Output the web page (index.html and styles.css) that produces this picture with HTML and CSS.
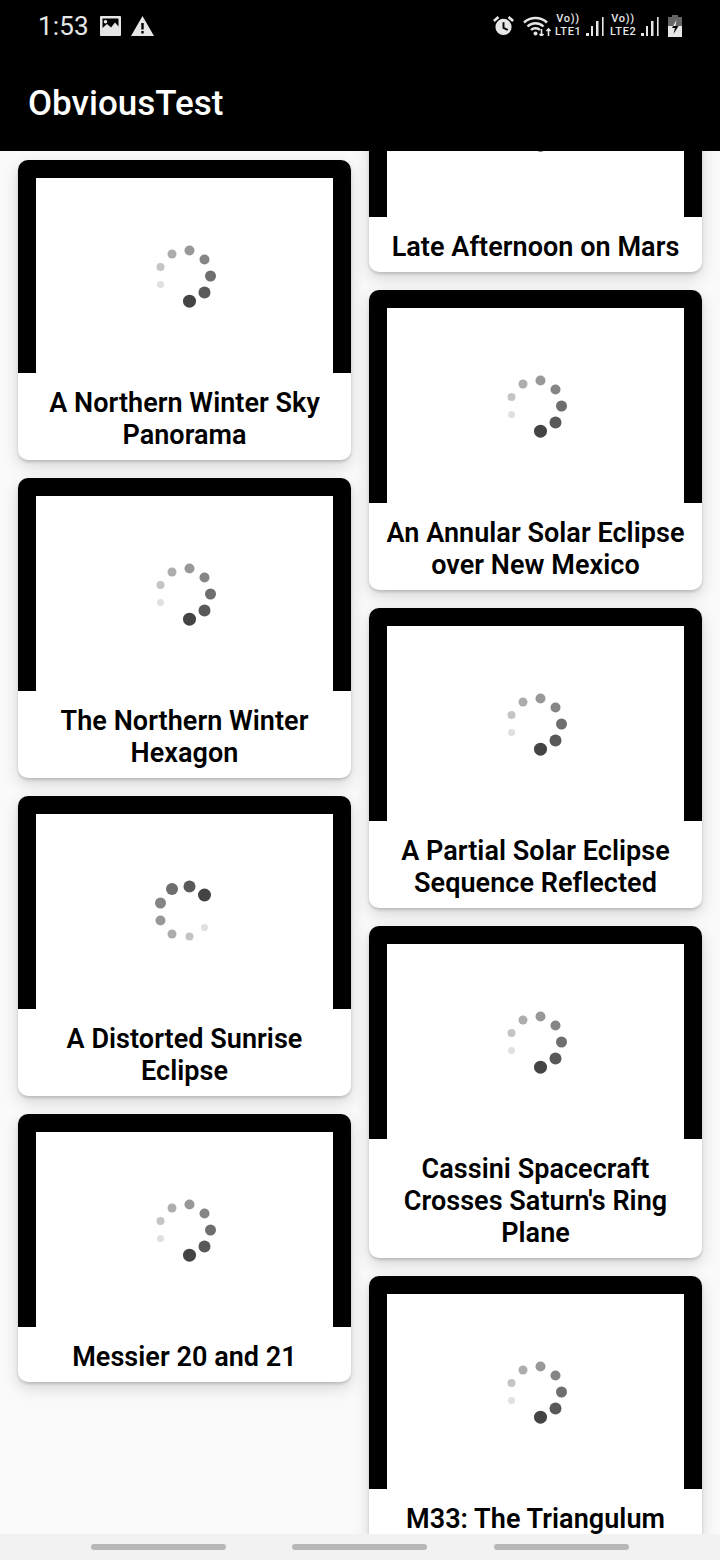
FILE: index.html
```html
<!DOCTYPE html>
<html lang="en">
<head>
<meta charset="utf-8">
<title>ObviousTest</title>
<link rel="stylesheet" href="styles.css">
</head>
<body>
<svg class="defs" aria-hidden="true">
  <symbol id="spin-a" viewBox="-33 -33 66 66">
    <circle cx="4.5" cy="25.2" r="6.5" fill="#444"/>
    <circle cx="19.5" cy="16.5" r="6" fill="#595959"/>
    <circle cx="25.5" cy="0" r="5.5" fill="#6e6e6e"/>
    <circle cx="19.5" cy="-16.5" r="5" fill="#858585"/>
    <circle cx="4.5" cy="-25.5" r="5" fill="#989898"/>
    <circle cx="-13" cy="-22" r="4.5" fill="#adadad"/>
    <circle cx="-24.5" cy="-9" r="4" fill="#c4c4c4"/>
    <circle cx="-24.5" cy="8.5" r="3.5" fill="#e0e0e0"/>
  </symbol>
  <symbol id="spin-b" viewBox="-33 -33 66 66">
    <circle cx="19.5" cy="-17" r="6.5" fill="#444"/>
    <circle cx="4.5" cy="-25.5" r="6" fill="#595959"/>
    <circle cx="-13" cy="-23" r="6" fill="#6e6e6e"/>
    <circle cx="-24.5" cy="-9" r="5.5" fill="#858585"/>
    <circle cx="-24.5" cy="8.5" r="5" fill="#989898"/>
    <circle cx="-13" cy="22" r="4.5" fill="#adadad"/>
    <circle cx="4.5" cy="24.5" r="4" fill="#c4c4c4"/>
    <circle cx="19.5" cy="15.5" r="3.5" fill="#e0e0e0"/>
  </symbol>
</svg>

<header class="appbar">
  <div class="status">
    <div class="status-left">
      <span class="time">1:53</span>
      <svg class="ic-image" viewBox="0 0 21 20"><path fill="#e6e6e6" fill-rule="evenodd" d="M1 0h19a1 1 0 0 1 1 1v18a1 1 0 0 1-1 1H1a1 1 0 0 1-1-1V1a1 1 0 0 1 1-1zM2.500 2.500v9.500l4.500-4 4 3.500 4-5 3.500 4V2.500zM5.500 4a1.800 1.800 0 1 1 0 3.600a1.800 1.800 0 0 1 0-3.600z"/></svg>
      <svg class="ic-warn" viewBox="0 0 23 20"><path fill="#e6e6e6" fill-rule="evenodd" d="M11.500 0L23 20H0zM10.300 7v6.500h2.400V7zM10.300 15v2.400h2.400V15z"/></svg>
    </div>
    <div class="status-right">
      <svg class="ic-alarm" viewBox="0 0 22 22"><path fill="#e6e6e6" fill-rule="evenodd" d="M11 3.500a8.500 8.500 0 1 1 0 17a8.500 8.500 0 0 1 0-17zM10 7v6.500l5 2.500 1-1.600-4-2V7zM1.800 6.800L0 4.800 4.800.6l1.800 2zM20.200 6.800L22 4.800 17.200.6l-1.800 2z"/></svg>
      <svg class="ic-wifi" viewBox="0 0 28 20"><path fill="none" stroke="#e6e6e6" stroke-width="2.400" d="M1 6.500a17 17 0 0 1 23 0M4.500 10.500a11.500 11.500 0 0 1 16 0M8 14a6.500 6.500 0 0 1 9 0"/><circle cx="12.500" cy="17.500" r="2" fill="#e6e6e6"/><path fill="none" stroke="#e6e6e6" stroke-width="1.600" d="M18.500 13v7M16.500 18l2 2 2-2M25.500 20v-7M23.500 15l2-2 2 2"/></svg>
      <div class="sim">Vo))<br>LTE1</div>
      <svg class="ic-bars" viewBox="0 0 18 19"><path fill="#e6e6e6" d="M0 16h3v3H0zM5 9h2v10H5zM10 4h2.500v15H10zM16 0h1.600v19H16z"/></svg>
      <div class="sim">Vo))<br>LTE2</div>
      <svg class="ic-bars" viewBox="0 0 18 19"><path fill="#e6e6e6" d="M0 16h3v3H0zM5 9h2v10H5zM10 4h2.500v15H10zM16 0h1.600v19H16z"/></svg>
      <svg class="ic-batt" viewBox="0 0 14 22"><path fill="#666" d="M4 0h6v2h4v9H0V2h4z"/><path fill="#e6e6e6" fill-rule="evenodd" d="M0 11h14v11H0zM8.500 5L4 13h3l-1.500 6L10.500 11H7.500z"/></svg>
    </div>
  </div>
  <h1 class="title">ObviousTest</h1>
</header>

<main class="grid">
  <section class="col col-left">
    <article class="card">
      <div class="thumb"><div class="thumb-inner"><svg class="spinner"><use href="#spin-a"/></svg></div></div>
      <h2 class="name">A Northern Winter Sky Panorama</h2>
    </article>
    <article class="card">
      <div class="thumb"><div class="thumb-inner"><svg class="spinner"><use href="#spin-a"/></svg></div></div>
      <h2 class="name">The Northern Winter Hexagon</h2>
    </article>
    <article class="card">
      <div class="thumb"><div class="thumb-inner"><svg class="spinner"><use href="#spin-b"/></svg></div></div>
      <h2 class="name">A Distorted Sunrise Eclipse</h2>
    </article>
    <article class="card">
      <div class="thumb"><div class="thumb-inner"><svg class="spinner"><use href="#spin-a"/></svg></div></div>
      <h2 class="name">Messier 20 and 21</h2>
    </article>
  </section>
  <section class="col col-right">
    <article class="card">
      <div class="thumb"><div class="thumb-inner"><svg class="spinner"><use href="#spin-a"/></svg></div></div>
      <h2 class="name">Late Afternoon on Mars</h2>
    </article>
    <article class="card">
      <div class="thumb"><div class="thumb-inner"><svg class="spinner"><use href="#spin-a"/></svg></div></div>
      <h2 class="name">An Annular Solar Eclipse over New Mexico</h2>
    </article>
    <article class="card">
      <div class="thumb"><div class="thumb-inner"><svg class="spinner"><use href="#spin-a"/></svg></div></div>
      <h2 class="name">A Partial Solar Eclipse Sequence Reflected</h2>
    </article>
    <article class="card">
      <div class="thumb"><div class="thumb-inner"><svg class="spinner"><use href="#spin-a"/></svg></div></div>
      <h2 class="name">Cassini Spacecraft Crosses Saturn's Ring Plane</h2>
    </article>
    <article class="card">
      <div class="thumb"><div class="thumb-inner"><svg class="spinner"><use href="#spin-a"/></svg></div></div>
      <h2 class="name">M33: The Triangulum</h2>
    </article>
  </section>
</main>

<nav class="navbar">
  <span class="pill"></span>
  <span class="pill"></span>
  <span class="pill"></span>
</nav>
</body>
</html>
```
FILE: styles.css
```css
* { box-sizing: border-box; }
html, body { margin: 0; padding: 0; }
body {
  width: 720px;
  height: 1560px;
  display: flex;
  flex-direction: column;
  overflow: hidden;
  background: #fafafa;
  font-family: Roboto, "Liberation Sans", sans-serif;
}
.defs { width: 0; height: 0; display: block; }

.appbar {
  height: 151px;
  flex: none;
  background: #000;
  position: relative;
  z-index: 2;
  display: flex;
  flex-direction: column;
}
.status {
  height: 52px;
  display: flex;
  justify-content: space-between;
  align-items: center;
  padding: 0 38px;
}
.status-left, .status-right { display: flex; align-items: center; }
.time { color: #e6e6e6; font-size: 26px; line-height: 30px; letter-spacing: .2px; }
.ic-image { width: 21px; height: 20px; margin-left: 11px; }
.ic-warn { width: 23px; height: 20px; margin-left: 10px; }
.ic-alarm { width: 21px; height: 22px; }
.ic-wifi { width: 28px; height: 20px; margin-left: 9px; }
.sim {
  width: 26px;
  margin: 0 0 2px 4px;
  text-align: center;
  white-space: nowrap;
  color: #e6e6e6;
  font-size: 11px;
  font-weight: 500;
  line-height: 13px;
  letter-spacing: .7px;
}
.ic-bars + .sim { margin-left: 6px; }
.ic-bars { width: 18px; height: 19px; margin-left: 5px; }
.ic-batt { width: 14px; height: 22px; margin-left: 9px; }

.title {
  margin: 30px 0 0;
  padding-left: 28px;
  color: #fff;
  font-size: 35px;
  line-height: 44px;
  font-weight: 500;
}

.grid {
  flex: 1;
  min-height: 0;
  display: flex;
  overflow: hidden;
  padding-left: 18px;
  gap: 18px;
}
.col { width: 333px; flex: none; display: flex; flex-direction: column; gap: 18px; }
.col-left { padding-top: 9px; }
.col-right { margin-top: -147px; }

.card {
  flex: none;
  background: #fff;
  border-radius: 10px;
  overflow: hidden;
  box-shadow: 0 2px 3px rgba(0, 0, 0, .16), 0 6px 16px rgba(0, 0, 0, .15);
}
.thumb {
  height: 213px;
  background: #000;
  padding: 18px 18px 0;
}
.thumb-inner {
  height: 195px;
  background: #fff;
  display: flex;
  align-items: center;
  justify-content: center;
}
.spinner { width: 66px; height: 66px; display: block; }
.name {
  margin: 0;
  padding: 14px 16px 9px;
  text-align: center;
  color: #000;
  font-size: 27px;
  line-height: 32px;
  font-weight: 600;
  letter-spacing: .05px;
}

.navbar {
  height: 26px;
  flex: none;
  background: #f2f2f2;
  position: relative;
  z-index: 2;
  display: flex;
  gap: 66.400px;
  align-items: center;
  padding-left: 91px;
}
.pill { width: 135px; height: 6px; border-radius: 3px; background: #b8b8b8; }
```
